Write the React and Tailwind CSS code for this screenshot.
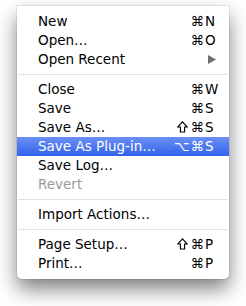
import React from 'react';

const items = [
    { label: 'New', mods: '⌘', key: 'N' },
    { label: 'Open…', mods: '⌘', key: 'O' },
    { label: 'Open Recent', submenu: true },
    { sep: true },
    { label: 'Close', mods: '⌘', key: 'W' },
    { label: 'Save', mods: '⌘', key: 'S' },
    { label: 'Save As…', shift: true, mods: '⌘', key: 'S' },
    { label: 'Save As Plug-in…', mods: '⌥⌘', key: 'S', active: true },
    { label: 'Save Log…' },
    { label: 'Revert', disabled: true },
    { sep: true },
    { label: 'Import Actions…' },
    { sep: true },
    { label: 'Page Setup…', shift: true, mods: '⌘', key: 'P' },
    { label: 'Print…', mods: '⌘', key: 'P' },
];

// hollow shift arrow like the Lucida glyph
const ShiftGlyph = () => (
    <svg width="11" height="12" viewBox="0 0 11 12" className="mr-[3px] mb-px">
        <path
            d="M5.5 0.9 L10.3 6 L7.6 6 L7.6 11 L3.4 11 L3.4 6 L0.7 6 Z"
            fill="none"
            stroke="currentColor"
            strokeWidth="1.15"
        />
    </svg>
);

const MenuRow = ({ item }) => {
    const base = 'h-[19px] flex items-center pl-[21px] pr-[11px]';
    const tone = item.active
        ? 'bg-gradient-to-b from-[#6b8ff5] to-[#3261ea] text-white'
        : item.disabled
        ? 'text-[#9a9a9a]'
        : 'text-black';

    return (
        <div className={`${base} ${tone}`}>
            <span className="flex-1">{item.label}</span>
            {item.key && (
                <span className="flex items-center">
                    {item.shift && <ShiftGlyph />}
                    <span className="text-right tracking-[1px]">{item.mods}</span>
                    <span className="w-[13px]">{item.key}</span>
                </span>
            )}
            {item.submenu && (
                <svg width="8" height="9" viewBox="0 0 8 9" className="mr-[2px]">
                    <path d="M0 0 L8 4.5 L0 9 Z" fill="#6e6e6e" />
                </svg>
            )}
        </div>
    );
};

export default function App() {
    return (
        <div className="w-[246px] h-[306px] bg-white pt-[6px] pl-[17px]">
            <div
                className="w-[212px] bg-white rounded-b-[5px] py-[6px] text-[13.5px] leading-[19px] shadow-[0_10px_20px_rgba(0,0,0,0.5),0_0_0_1px_rgba(0,0,0,0.07)]"
                style={{ fontFamily: '"DejaVu Sans", "Lucida Grande", sans-serif' }}
            >
                {items.map((item, i) =>
                    item.sep ? (
                        <div key={i} className="py-[5px]">
                            <div className="h-px bg-[#e2e2e2] mx-px" />
                        </div>
                    ) : (
                        <MenuRow key={i} item={item} />
                    )
                )}
            </div>
        </div>
    );
}
